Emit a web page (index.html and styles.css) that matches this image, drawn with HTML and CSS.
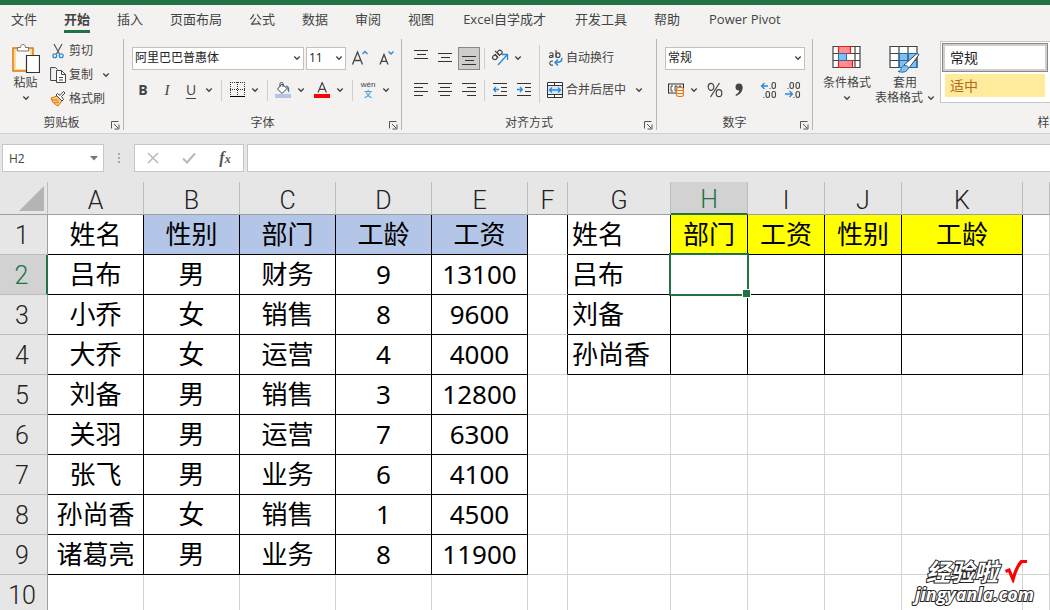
FILE: index.html
```html
<!DOCTYPE html>
<html lang="zh-CN">
<head>
<meta charset="utf-8">
<title>Excel</title>
<link rel="stylesheet" href="styles.css">
</head>
<body>
<svg class="defs" aria-hidden="true">
  <symbol id="car" viewBox="0 0 8 8"><path d="M1.300 2.500 4 5.200 6.700 2.500" fill="none" stroke="#444" stroke-width="1.400"/></symbol>
  <symbol id="launch" viewBox="0 0 9 9"><path d="M.5 7.500V.5h7M3 3l4 4M8 3.500V8H3.500" fill="none" stroke="#555"/></symbol>
</svg>
<header class="ribbon">
  <nav class="tabs">
    <a href="#">文件</a><a href="#" class="active">开始</a><a href="#">插入</a><a href="#">页面布局</a><a href="#">公式</a><a href="#">数据</a><a href="#">审阅</a><a href="#">视图</a><a href="#" class="addin">Excel自学成才</a><a href="#">开发工具</a><a href="#">帮助</a><a href="#" class="addin">Power Pivot</a>
  </nav>
  <div class="groups">
    <section class="group clipboard">
      <div class="clip-body">
        <button class="big paste">
          <svg width="28" height="32" viewBox="0 0 28 32"><path d="M1 5h20v23H1z" fill="#fbdc95" stroke="#e07a10" stroke-width="1.500"/><path d="M4 8h14v18H4z" fill="#fafafa"/><path d="M5.500 8V4.500h3c0-4 5-4 5 0h3V8z" fill="#fff" stroke="#777"/><path d="M14.500 12.500h13v17h-13z" fill="#fff" stroke="#333" stroke-width="1.200"/></svg>
          <span>粘贴</span>
          <svg class="car"><use href="#car"/></svg>
        </button>
        <div class="clip-list">
          <button class="line"><svg width="16" height="16" viewBox="0 0 16 16"><path d="M4 1l5.500 10M12 1 6.500 11" fill="none" stroke="#555" stroke-width="1.200"/><circle cx="4.800" cy="12.800" r="1.900" fill="none" stroke="#2b88d8" stroke-width="1.300"/><circle cx="11.200" cy="12.800" r="1.900" fill="none" stroke="#2b88d8" stroke-width="1.300"/></svg><span>剪切</span></button>
          <button class="line"><svg width="16" height="16" viewBox="0 0 16 16"><path d="M6 13.500H.6V.6h5l2 2" fill="none" stroke="#444"/><path d="M6.500 3.500h5l4 4v8h-9z" fill="#fff" stroke="#444"/><path d="M11.500 3.500v4h4M9 10.500h4M9 13h4" fill="none" stroke="#444"/></svg><span>复制</span><svg class="car far"><use href="#car"/></svg></button>
          <button class="line"><svg width="16" height="16" viewBox="0 0 16 16"><path d="M1 7l6-2 5 5-4 5C4 13 2 11 1 7z" fill="#f9c77e" stroke="#d9730d"/><path d="M2 9l6 0M4 12l5-1" stroke="#d9730d"/><path d="M6 4l6 6 1.500-1.500-2-3 3.500-3.500-1.500-1.500L10 4.500 7.500 2.500z" fill="#fff" stroke="#444"/></svg><span>格式刷</span></button>
        </div>
      </div>
      <footer><span>剪贴板</span><button class="launch" aria-label="剪贴板选项"><svg><use href="#launch"/></svg></button></footer>
    </section>

    <section class="group font">
      <div class="rows">
        <div class="row fields">
          <label class="combo font-name"><select aria-label="字体"><option>阿里巴巴普惠体</option></select><svg class="car"><use href="#car"/></svg></label>
          <label class="combo font-size"><select aria-label="字号"><option>11</option></select><svg class="car"><use href="#car"/></svg></label>
          <button class="ic" aria-label="增大字号"><svg width="18" height="18" viewBox="0 0 18 18"><path d="M1.500 15.500 6.500 3l5 12.500M3.300 11.500h6.400" fill="none" stroke="#444" stroke-width="1.300"/><path d="M11.500 5 14 2.500 16.500 5" fill="none" stroke="#2b88d8" stroke-width="1.300"/></svg></button>
          <button class="ic" aria-label="减小字号"><svg width="18" height="18" viewBox="0 0 18 18"><path d="M3 15.500 7 5.500l4 10M4.500 12.300h5" fill="none" stroke="#444" stroke-width="1.300"/><path d="M11.500 2.500 14 5l2.500-2.500" fill="none" stroke="#2b88d8" stroke-width="1.300"/></svg></button>
        </div>
        <div class="row">
          <button class="ic glyph bold">B</button><button class="ic glyph italic">I</button>
          <span class="split"><button class="ic glyph under">U</button><button class="drop" aria-label="下划线选项"><svg class="car"><use href="#car"/></svg></button></span>
          <i class="sep"></i>
          <span class="split"><button class="ic" aria-label="边框"><svg width="15" height="16" viewBox="0 0 15 16" shape-rendering="crispEdges"><path d="M0 .5h15M0 7.500h15M.5 0v14M7.500 0v14M14.500 0v14" fill="none" stroke="#333" stroke-dasharray="1 1"/><path d="M0 14.500h15" stroke="#000"/></svg></button><button class="drop" aria-label="边框选项"><svg class="car"><use href="#car"/></svg></button></span>
          <i class="sep"></i>
          <span class="split"><button class="ic" aria-label="填充颜色"><svg width="16" height="16" viewBox="0 0 16 16"><path d="M7 2 2.500 7 7 11.500 12 6.500z" fill="#fff" stroke="#444"/><path d="M5 5V1.500c0-1.500 3-1.500 3 0V5" fill="none" stroke="#444"/><path d="M10.500 3.500c3 0 4.500 2 3.500 7-1.500-1-1.500-3-1.500-4.500z" fill="#2b78c0"/><path d="M0 12h16v4H0z" fill="#b4c6e7"/></svg></button><button class="drop" aria-label="填充颜色选项"><svg class="car"><use href="#car"/></svg></button></span>
          <span class="split"><button class="ic" aria-label="字体颜色"><svg width="16" height="16" viewBox="0 0 16 16"><path d="M4 10.500 8.200.5l4.200 10M5.500 7.300h5.500" fill="none" stroke="#444" stroke-width="1.200"/><path d="M0 12h16v4H0z" fill="red"/></svg></button><button class="drop" aria-label="字体颜色选项"><svg class="car"><use href="#car"/></svg></button></span>
          <i class="sep"></i>
          <span class="split"><button class="ic pinyin"><span>wén</span><b>文</b></button><button class="drop" aria-label="拼音选项"><svg class="car"><use href="#car"/></svg></button></span>
        </div>
      </div>
      <footer><span>字体</span><button class="launch" aria-label="字体选项"><svg><use href="#launch"/></svg></button></footer>
    </section>

    <section class="group align">
      <div class="align-body">
        <div class="rows">
          <div class="row">
            <button class="ic" aria-label="顶端对齐"><svg width="14" height="16" viewBox="0 0 14 16"><path d="M0 .5h14M3 4.500h9M0 8.500h14" stroke="#333" fill="none"/></svg></button><button class="ic" aria-label="垂直居中"><svg width="14" height="16" viewBox="0 0 14 16"><path d="M0 3.500h14M3 7.500h9M0 11.500h14" stroke="#333" fill="none"/></svg></button><button class="ic on" aria-label="底端对齐"><svg width="14" height="16" viewBox="0 0 14 16"><path d="M0 6.500h14M3 10.500h9M0 14.500h14" stroke="#333" fill="none"/></svg></button>
            <i class="sep"></i>
            <span class="split"><button class="ic" aria-label="方向"><svg width="18" height="18" viewBox="0 0 18 18"><g fill="none" stroke="#444" stroke-width="1.200" transform="rotate(-45 6 7)"><circle cx="3.500" cy="6.500" r="2.200"/><path d="M5.800 4v5M8.200 2v7"/><circle cx="10.500" cy="6.500" r="2.200"/></g><path d="M7 16 16 6M11 5.500h5.500V11" fill="none" stroke="#2b88d8" stroke-width="1.300"/></svg></button><button class="drop" aria-label="方向选项"><svg class="car"><use href="#car"/></svg></button></span>
          </div>
          <div class="row">
            <button class="ic" aria-label="左对齐"><svg width="14" height="14" viewBox="0 0 14 14"><path d="M0 .5h14M0 4.500h9M0 8.500h14M0 12.500h9" stroke="#333"/></svg></button><button class="ic" aria-label="居中"><svg width="14" height="14" viewBox="0 0 14 14"><path d="M0 .5h14M2 4.500h10M0 8.500h14M2 12.500h10" stroke="#333"/></svg></button><button class="ic" aria-label="右对齐"><svg width="14" height="14" viewBox="0 0 14 14"><path d="M0 .5h14M5 4.500h9M0 8.500h14M5 12.500h9" stroke="#333"/></svg></button>
            <i class="sep"></i>
            <button class="ic" aria-label="减少缩进量"><svg width="14" height="14" viewBox="0 0 14 14"><path d="M0 .5h14M8 4.500h6M8 8.500h6M0 12.500h14" stroke="#333"/><path d="M6 6.500H.8M3 4 .7 6.500 3 9" fill="none" stroke="#2b88d8" stroke-width="1.300"/></svg></button><button class="ic" aria-label="增加缩进量"><svg width="14" height="14" viewBox="0 0 14 14"><path d="M0 .5h14M8 4.500h6M8 8.500h6M0 12.500h14" stroke="#333"/><path d="M0 6.500h5.200M3 4l2.300 2.500L3 9" fill="none" stroke="#2b88d8" stroke-width="1.300"/></svg></button>
          </div>
        </div>
        <i class="tall"></i>
        <div class="rows">
          <button class="line row"><svg width="16" height="18" viewBox="0 0 16 18"><g fill="none" stroke="#444" stroke-width="1.100"><path d="M2.500 4.500c1-1 3.500-1 3.500.5v3.500M6 6.200c-4-.2-4.500 2.300-2.500 2.300 1.200 0 2.500-.8 2.500-2M9 1v7.500"/><ellipse cx="11" cy="6.200" rx="2" ry="2.300"/><path d="M6 12.300c-4-1.500-4.500 5 0 3.700"/></g><path d="M14.500 9c1 3-1 4.500-6 4.500M11 10.500l-3 3 3 3" fill="none" stroke="#2b88d8" stroke-width="1.500"/></svg><span>自动换行</span></button>
          <button class="line row"><svg width="16" height="16" viewBox="0 0 16 16"><path d="M.5.5h15v15H.5zM.5 3.500h15M.5 12.500h15M7.500 0v3M7.500 13v3" fill="#fff" stroke="#333"/><path d="M1 4h14v8H1z" fill="#d5e9f8"/><path d="M3 8h10M5 5.500 2.500 8 5 10.500M11 5.500 13.500 8 11 10.500" fill="none" stroke="#2b88d8" stroke-width="1.300"/></svg><span>合并后居中</span><svg class="car far"><use href="#car"/></svg></button>
        </div>
      </div>
      <footer><span>对齐方式</span><button class="launch" aria-label="对齐选项"><svg><use href="#launch"/></svg></button></footer>
    </section>

    <section class="group number">
      <div class="rows">
        <div class="row fields"><label class="combo num-format"><select aria-label="数字格式"><option>常规</option></select><svg class="car"><use href="#car"/></svg></label></div>
        <div class="row">
          <span class="split"><button class="ic" aria-label="会计数字格式"><svg width="16" height="14" viewBox="0 0 16 14"><path d="M.5 1h15v9H.5z" fill="#fff" stroke="#333" stroke-width="1.200"/><path d="M5 3H3v5h2M7 3h2v5H7zM11 5V3h2v2" fill="none" stroke="#444"/><path d="M8.500 6v6c0 2 7 2 7 0V6c0-2-7-2-7 0z" fill="#fff" stroke="#e07a10" stroke-width="1.200"/><path d="M8.500 6.500c0 1.500 7 1.500 7 0M8.500 9.500c0 1.500 7 1.500 7 0" fill="none" stroke="#e07a10" stroke-width="1.200"/></svg></button><button class="drop" aria-label="货币选项"><svg class="car"><use href="#car"/></svg></button></span>
          <button class="ic percent-gap" aria-label="百分比"><svg width="16" height="16" viewBox="0 0 16 16"><ellipse cx="4" cy="4.800" rx="2.800" ry="3.500" fill="none" stroke="#444" stroke-width="1.200"/><ellipse cx="12" cy="11.200" rx="2.800" ry="3.500" fill="none" stroke="#444" stroke-width="1.200"/><path d="M12.500 1 3.500 15" stroke="#444" stroke-width="1.200"/></svg></button>
          <button class="ic" aria-label="千位分隔"><svg width="10" height="14" viewBox="0 0 10 14"><circle cx="5" cy="4" r="3.500" fill="#444"/><path d="M8.500 4c.3 4-2 7.500-6.500 9l-.5-1.200C4 10.500 5.500 9 5.500 6z" fill="#444"/></svg></button>
          <i class="sep"></i>
          <button class="ic" aria-label="增加小数位数"><svg width="18" height="18" viewBox="0 0 18 18"><g fill="none" stroke="#444" stroke-width="1.100"><rect x="12" y="1.500" width="3.500" height="6" rx="1.700"/><rect x="6" y="10.500" width="3.500" height="6" rx="1.700"/><rect x="12" y="10.500" width="3.500" height="6" rx="1.700"/><path d="M9.500 7.500h1M3.500 16.500h1"/></g><path d="M8 5H1.500M4.500 2l-3 3 3 3" fill="none" stroke="#2b88d8" stroke-width="1.300"/></svg></button><button class="ic" aria-label="减少小数位数"><svg width="18" height="18" viewBox="0 0 18 18"><g fill="none" stroke="#444" stroke-width="1.100"><rect x="6" y="1.500" width="3.500" height="6" rx="1.700"/><rect x="12" y="1.500" width="3.500" height="6" rx="1.700"/><rect x="12" y="10.500" width="3.500" height="6" rx="1.700"/><path d="M3.500 7.500h1M9.500 16.500h1"/></g><path d="M1 13h7.500M5.500 10l3 3-3 3" fill="none" stroke="#2b88d8" stroke-width="1.300"/></svg></button>
        </div>
      </div>
      <footer><span>数字</span><button class="launch" aria-label="数字选项"><svg><use href="#launch"/></svg></button></footer>
    </section>

    <section class="group styles">
      <div class="styles-body">
        <button class="big">
          <svg width="30" height="28" viewBox="0 0 30 28"><path d="M1 1.500h27v21H1zM1 8.500h27M1 15.500h27M23 1.500v21" fill="#fff" stroke="#444" stroke-width="1.200"/><path d="M6.500 1.500h12v7h-12zM6.500 15.500h14v7h-14z" fill="#ff8f8f" stroke="#d92020" stroke-width="1.200"/><path d="M6.500 8.500h8v7h-8z" fill="#83beec" stroke="#1a6fb8"/></svg>
          <span>条件格式</span><svg class="car"><use href="#car"/></svg>
        </button>
        <button class="big">
          <svg width="32" height="28" viewBox="0 0 32 28"><path d="M1 1.500h27v21H1z" fill="#fff"/><path d="M10 8.500h18v14H10z" fill="#83beec"/><path d="M1 1.500h27v21H1zM1 8.500h27M1 15.500h27M10 1.500v21M19 1.500v21" fill="none" stroke="#444" stroke-width="1.200"/><path d="M10 8.500h18v14H10zM10 15.500h18M19 8.500v14" fill="none" stroke="#1a6fb8"/><path d="M15 20 28 8.500l2 1L20 23z" fill="#fff" stroke="#444"/><path d="M9 26.500c4 0 2-6 7-6 4 0 4 3 2 5s-6 2-9 1z" fill="#83beec" stroke="#1a6fb8"/></svg>
          <span>套用</span><span>表格格式 <svg class="car"><use href="#car"/></svg></span>
        </button>
        <div class="gallery"><button class="normal">常规</button><button class="neutral">适中</button></div>
      </div>
      <footer><span>样式</span></footer>
    </section>
  </div>
</header>

<div class="formula-bar">
  <label class="name-box"><input type="text" value="H2" aria-label="名称框"><svg width="8" height="5" viewBox="0 0 8 5"><path d="M0 0h8L4 4.500z" fill="#777"/></svg></label>
  <svg class="dots" width="2" height="11" viewBox="0 0 2 11"><path d="M0 0h2v2H0zM0 4h2v2H0zM0 8h2v2H0z" fill="#aaa"/></svg>
  <div class="fx">
    <button aria-label="取消"><svg width="12" height="12" viewBox="0 0 12 12"><path d="M1 1l10 10M11 1 1 11" stroke="#bbb" stroke-width="1.600"/></svg></button><button aria-label="输入"><svg width="14" height="12" viewBox="0 0 14 12"><path d="M1 6.500 5 10.500 13 1.500" fill="none" stroke="#bbb" stroke-width="2.200"/></svg></button><button class="fn">f<small>x</small></button>
  </div>
  <input class="formula" type="text" aria-label="编辑栏">
</div>

<main class="sheet">
<table>
  <colgroup><col class="c-head"><col class="c-a"><col class="c-a"><col class="c-a"><col class="c-a"><col class="c-a"><col class="c-f"><col class="c-g"><col class="c-h"><col class="c-h"><col class="c-h"><col class="c-k"><col></colgroup>
  <thead><tr><th class="corner"><svg width="25" height="25" viewBox="0 0 25 25"><path d="M25 0v25H0z" fill="#b4b4b4"/></svg></th><th>A</th><th>B</th><th>C</th><th>D</th><th>E</th><th>F</th><th>G</th><th class="sel">H</th><th>I</th><th>J</th><th>K</th><th></th></tr></thead>
  <tbody>
    <tr><th>1</th><td class="b">姓名</td><td class="b blue">性别</td><td class="b blue">部门</td><td class="b blue">工龄</td><td class="b blue">工资</td><td class="edge"></td><td class="b left">姓名</td><td class="b yellow">部门</td><td class="b yellow">工资</td><td class="b yellow">性别</td><td class="b yellow">工龄</td><td></td></tr>
    <tr><th class="sel">2</th><td class="b">吕布</td><td class="b">男</td><td class="b">财务</td><td class="b">9</td><td class="b">13100</td><td class="edge"></td><td class="b left">吕布</td><td class="b current"></td><td class="b"></td><td class="b"></td><td class="b"></td><td></td></tr>
    <tr><th>3</th><td class="b">小乔</td><td class="b">女</td><td class="b">销售</td><td class="b">8</td><td class="b">9600</td><td class="edge"></td><td class="b left">刘备</td><td class="b"></td><td class="b"></td><td class="b"></td><td class="b"></td><td></td></tr>
    <tr><th>4</th><td class="b">大乔</td><td class="b">女</td><td class="b">运营</td><td class="b">4</td><td class="b">4000</td><td class="edge"></td><td class="b left">孙尚香</td><td class="b"></td><td class="b"></td><td class="b"></td><td class="b"></td><td></td></tr>
    <tr><th>5</th><td class="b">刘备</td><td class="b">男</td><td class="b">销售</td><td class="b">3</td><td class="b">12800</td><td></td><td></td><td></td><td></td><td></td><td></td><td></td></tr>
    <tr><th>6</th><td class="b">关羽</td><td class="b">男</td><td class="b">运营</td><td class="b">7</td><td class="b">6300</td><td></td><td></td><td></td><td></td><td></td><td></td><td></td></tr>
    <tr><th>7</th><td class="b">张飞</td><td class="b">男</td><td class="b">业务</td><td class="b">6</td><td class="b">4100</td><td></td><td></td><td></td><td></td><td></td><td></td><td></td></tr>
    <tr><th>8</th><td class="b">孙尚香</td><td class="b">女</td><td class="b">销售</td><td class="b">1</td><td class="b">4500</td><td></td><td></td><td></td><td></td><td></td><td></td><td></td></tr>
    <tr><th>9</th><td class="b">诸葛亮</td><td class="b">男</td><td class="b">业务</td><td class="b">8</td><td class="b">11900</td><td></td><td></td><td></td><td></td><td></td><td></td><td></td></tr>
    <tr><th>10</th><td></td><td></td><td></td><td></td><td></td><td></td><td></td><td></td><td></td><td></td><td></td><td></td></tr>
  </tbody>
</table>
</main>
<div class="watermark">
  <div class="brand"><span>经验啦</span><svg width="24" height="24" viewBox="0 0 24 24"><path d="M1.500 12.500 5 11l4 9.500C11 13 14 6 17.500 2.500H23" fill="none" stroke="red" stroke-width="3.200"/></svg></div>
  <div class="site">jingyanla.com</div>
</div>
</body>
</html>
```
FILE: styles.css
```css
* { box-sizing: border-box; }
body {
  margin: 0;
  height: 100vh;
  overflow: hidden;
  position: relative;
  display: flex;
  flex-direction: column;
  background: #e6e6e6;
  color: #444;
  font: 12px/16px "Open Sans", "Noto Sans CJK SC", sans-serif;
}
button {
  font: inherit;
  color: inherit;
  background: none;
  border: 0;
  padding: 0;
  display: flex;
  align-items: center;
  justify-content: center;
}
svg { flex: none; display: block; }
.defs { width: 0; height: 0; position: absolute; }
.car { width: 8px; height: 8px; }

/* ribbon */
.ribbon {
  flex: none;
  background: #f3f2f1;
  border-top: 5px solid #217346;
  border-bottom: 1px solid #d2d0ce;
  padding-bottom: 3px;
}
.tabs {
  display: flex;
  gap: 27px;
  height: 34px;
  padding: 4px 11px;
  font-size: 13px;
  line-height: 21px;
  white-space: nowrap;
}
.tabs a { color: #444; text-decoration: none; height: 24px; }
.tabs .active { font-weight: bold; border-bottom: 3px solid #217346; }
.tabs .addin { padding: 0 2px; }
.groups { display: flex; height: 91px; overflow: hidden; }
.group {
  flex: none;
  display: flex;
  flex-direction: column;
  justify-content: space-between;
  border-right: 1px solid #b8b6b4;
  padding: 0 7px;
}
.clipboard { width: 124px; }
.font { width: 278px; }
.align { width: 255px; }
.number { width: 156px; }
.styles { width: 474px; }
footer { display: flex; justify-content: center; height: 15px; position: relative; }
footer span { line-height: 16px; }
.launch { position: absolute; right: -4px; bottom: 0; }
.launch svg { width: 9px; height: 9px; }

.clip-body { display: flex; gap: 6px; }
.big { flex-direction: column; justify-content: flex-start; }
.paste { width: 37px; padding-top: 4px; }
.paste .car { margin-top: 3px; }
.clip-list { display: flex; flex-direction: column; }
.line { height: 24px; gap: 3px; justify-content: flex-start; white-space: nowrap; }
.far { margin-left: 6px; }

.rows { display: flex; flex-direction: column; gap: 8px; padding-top: 7px; }
.row { display: flex; align-items: center; height: 24px; }
.fields { gap: 2px; padding-left: 1px; }
.combo { flex: none; display: grid; align-items: center; justify-items: end; height: 23px; }
.combo select, .combo .car { grid-area: 1 / 1; }
.combo .car { margin-right: 3px; pointer-events: none; }
.combo select {
  appearance: none;
  width: 100%;
  height: 100%;
  padding: 0 2px;
  font: inherit;
  color: #222;
  background: #fff;
  border: 1px solid #c3c1bf;
  border-radius: 0;
}
.font-name { width: 172px; }
.font-size { width: 40px; }
.num-format { width: 140px; }
.ic { flex: none; width: 24px; height: 23px; }
.on { background: #cfcdcb; border: 1px solid #8a8886; width: 22px; margin: 0 1px; }
.drop { width: 12px; height: 23px; }
.split { display: flex; }
.split + .split, .percent-gap { margin-left: 3px; }
.sep { width: 1px; height: 21px; background: #d0cecc; margin: 0 3px; }
.split + .sep { margin-left: 6px; }
.glyph { font-size: 14px; }
.bold { font-weight: bold; }
.italic { font-family: "Liberation Serif", serif; font-style: italic; font-size: 15px; }
.under { text-decoration: underline; text-underline-offset: 3px; }
.pinyin { flex-direction: column; font: 8px/10px "Liberation Sans", "Noto Sans CJK SC", sans-serif; }
.pinyin b { color: #4fa3de; }
.align-body { display: flex; gap: 3px; }
.align-body .rows + .tall { width: 1px; height: 58px; margin: 6px 4px 0 0; background: #d0cecc; }

.styles-body { display: flex; align-items: flex-start; gap: 4px; padding-left: 3px; }
.styles .big { padding-top: 6px; }
.styles .big > svg:first-child { margin-bottom: 2px; }
.styles .big > span { display: flex; gap: 4px; align-items: center; line-height: 15px; }
.styles .big > .car { margin-top: 4px; }
.gallery {
  flex: 1;
  display: flex;
  flex-direction: column;
  gap: 2px;
  margin: 2px 0 0 1px;
  padding: 1px;
  background: #fff;
  border: 1px solid #c8c6c4;
  font-size: 14px;
}
.gallery button { width: 106px; padding-left: 7px; justify-content: flex-start; }
.normal { height: 29px; color: #222; border: 1px solid #8a8886; outline: 2px solid #d0cecc; outline-offset: -3px; }
.gallery .neutral { height: 23px; width: 100px; margin: 0 3px 4px; padding-left: 5px; background: #ffeb9c; color: #b36a1e; }

/* formula bar */
.formula-bar { flex: none; display: flex; align-items: center; height: 48px; padding-left: 2px; }
.formula-bar input { font: inherit; color: #444; border: 1px solid #c6c6c6; background: #fff; height: 28px; }
.name-box { display: grid; align-items: center; justify-items: end; width: 102px; }
.name-box input, .name-box svg { grid-area: 1 / 1; }
.name-box input { width: 100%; padding: 0 6px; }
.name-box svg { margin-right: 6px; }
.dots { margin: 0 14px; }
.fx { display: flex; width: 110px; height: 28px; background: #fff; border: 1px solid #c6c6c6; }
.fx button { flex: 1; }
.fn { font: italic bold 16px "Liberation Serif", serif; color: #555; }
.fn small { font-size: 12px; padding-top: 3px; }
.formula-bar .formula { flex: 1; margin-left: 3px; border-right: 0; }

/* worksheet */
.sheet { background: #fff; }
table { width: 100%; table-layout: fixed; border-collapse: separate; border-spacing: 0; }
.c-head { width: 48px; }
.c-a { width: 96px; }
.c-f { width: 40px; }
.c-g { width: 103px; }
.c-h { width: 77px; }
.c-k { width: 121px; }
th {
  height: 40px;
  padding: 2px 0 0;
  background: #e6e6e6;
  border-right: 1px solid #9e9e9e;
  border-bottom: 1px solid #bdbdbd;
  color: #222;
  font: 300 25px/32px Roboto, sans-serif;
}
tbody th { padding-right: 3px; }
thead th { height: 33px; border-right-color: #bdbdbd; border-bottom-color: #9e9e9e; padding-top: 5px; line-height: 27px; }
.corner svg { margin: 0 3px 3px auto; }
thead .corner { vertical-align: bottom; padding: 0; }
.sel { background: #d2d2d2; color: #217346; }
thead .sel { border-bottom: 2px solid #217346; line-height: 26px; }
tbody .sel { border-right: 2px solid #217346; }
td {
  height: 40px;
  padding: 0 0 2px;
  border-right: 1px solid #d4d4d4;
  border-bottom: 1px solid #d4d4d4;
  color: #000;
  text-align: center;
  font: 26px/36px "Noto Sans", "Noto Sans CJK SC", sans-serif;
  white-space: nowrap;
}
.b { border-color: #000; }
.edge { border-right-color: #000; }
.blue { background: #b4c6e7; }
.yellow { background: #ff0; }
.left { text-align: left; padding-left: 4px; }
.current { position: relative; }
.current::before { content: ""; position: absolute; inset: -2px; border: 2px solid #217346; }
.current::after {
  content: "";
  position: absolute;
  right: -4px;
  bottom: -4px;
  width: 7px;
  height: 7px;
  background: #217346;
  border: 1px solid #fff;
}

.watermark { position: absolute; right: 16px; bottom: 6px; color: #fff; }
.brand { display: flex; align-items: center; justify-content: flex-end; gap: 6px; padding-right: 6px; }
.brand span, .site {
  font: italic 700 24px/26px "Noto Sans CJK SC", sans-serif;
  -webkit-text-stroke: 2px #222;
  paint-order: stroke fill;
}
.site { font: bold italic 18px/20px "Open Sans", sans-serif; }
```
